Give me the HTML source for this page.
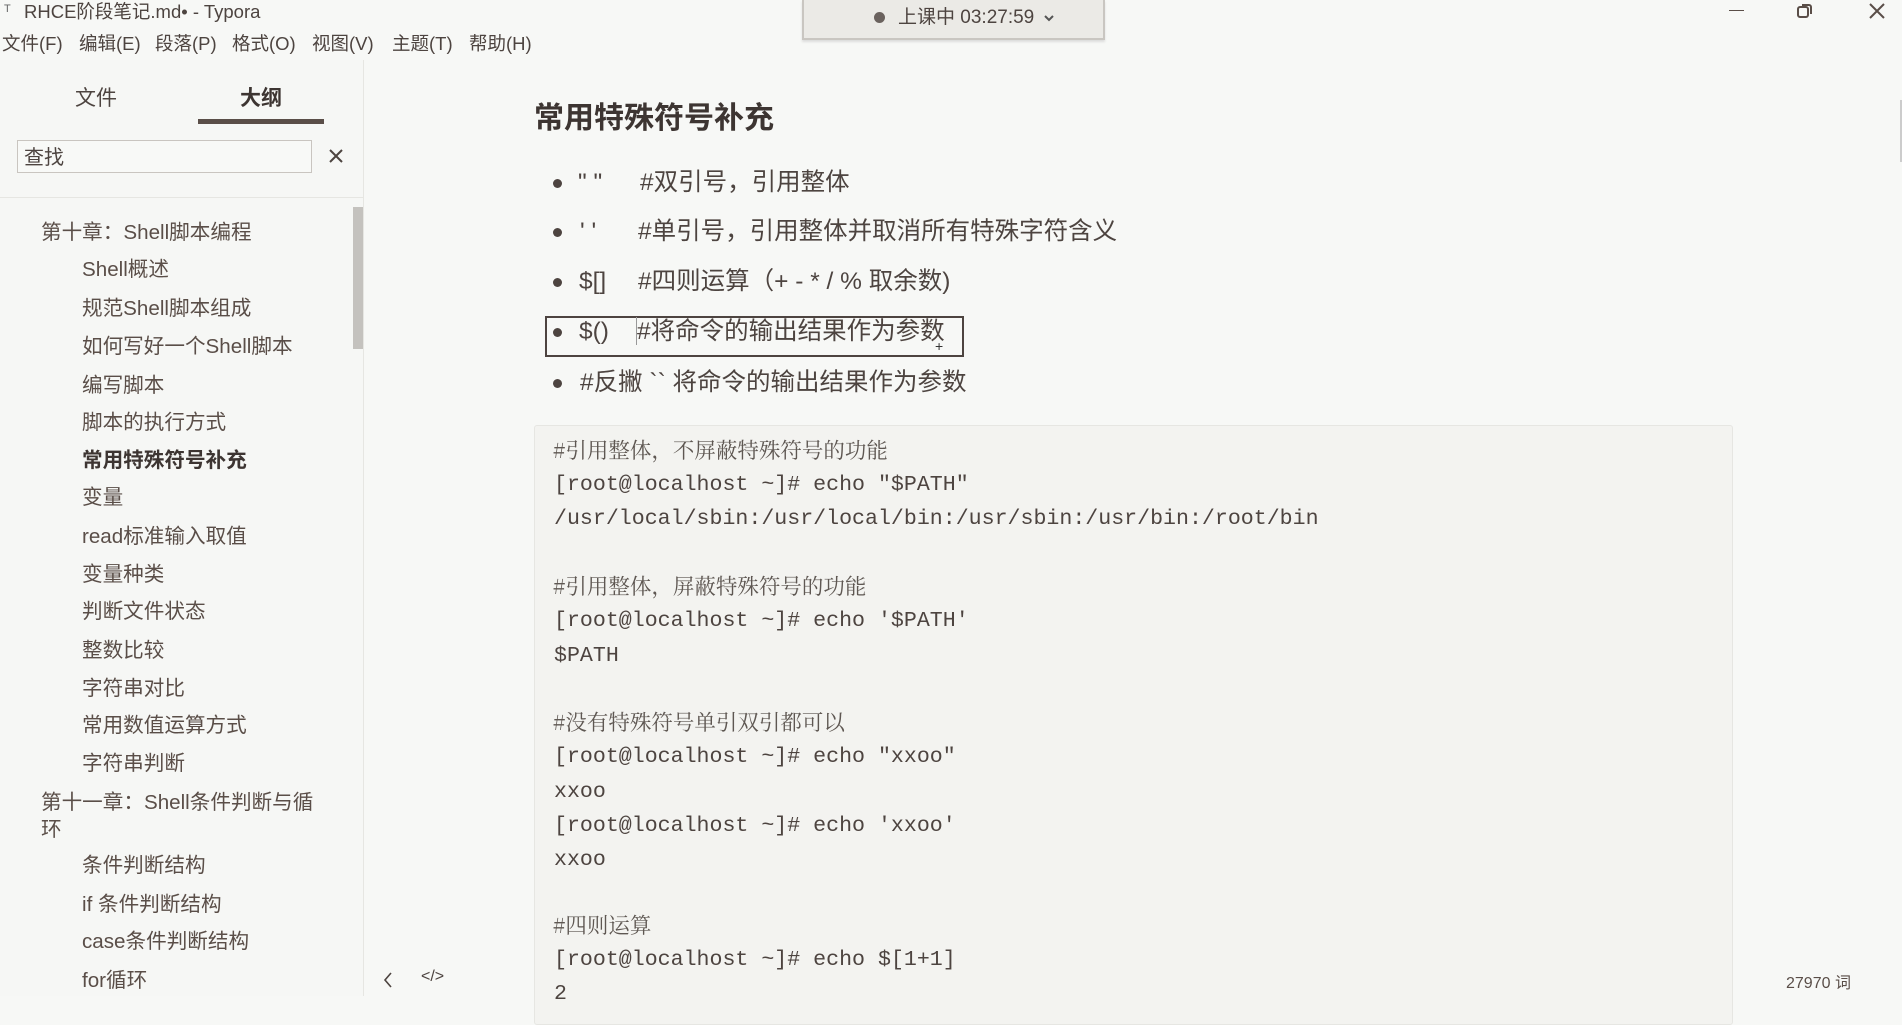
<!DOCTYPE html>
<html><head><meta charset="utf-8"><style>
*{margin:0;padding:0;box-sizing:border-box}
body{width:1902px;height:996px;overflow:hidden;background:#f7f8f6;position:relative;font-family:"Liberation Sans","Noto Sans CJK SC",sans-serif;color:#4d4440}
.a{position:absolute;white-space:nowrap}
.side{position:absolute;left:0;top:60px;width:364px;height:936px;border-right:1px solid #e6e6e2;background:#f6f7f5}
.o{position:absolute;font-size:20.6px;line-height:28px;color:#5a4e48;white-space:nowrap}
.l1{left:41px}.l2{left:82px}
.b{font-size:24.5px;line-height:32px;color:#4d4440}
.dot{position:absolute;width:9px;height:9px;border-radius:50%;background:#4d4440}
.code{position:absolute;left:534px;top:425px;width:1199px;height:600px;background:#f3f3f0;border:1px solid #e6e6e2;border-radius:3px}
.c{position:absolute;left:554px;font-family:"Liberation Mono","Noto Sans CJK SC",monospace;font-size:21.6px;line-height:30px;color:#4d4440;white-space:pre}
.cm{position:absolute;left:553px;font-family:"Noto Serif CJK SC",serif;font-size:21.5px;line-height:30px;color:#5e5752;white-space:pre}
.m{position:absolute;top:32px;font-size:18.5px;line-height:24px;white-space:nowrap}
</style></head><body>
<div class="a" style="left:4px;top:3px;font-size:11px;color:#666">T</div>
<div class="a" style="left:24px;top:1px;font-size:18.5px;line-height:22px">RHCE阶段笔记.md• - Typora</div>
<div class="m" style="left:2px">文件(F)</div>
<div class="m" style="left:79px">编辑(E)</div>
<div class="m" style="left:155px">段落(P)</div>
<div class="m" style="left:232px">格式(O)</div>
<div class="m" style="left:312px">视图(V)</div>
<div class="m" style="left:392px">主题(T)</div>
<div class="m" style="left:469px">帮助(H)</div>
<div class="a" style="left:802px;top:0;width:303px;height:40px;background:#ebeae6;border:2px solid #c9c6c1;border-top:none;box-shadow:0 2px 2px #ddd"></div>
<div class="a" style="left:874px;top:12px;width:11px;height:11px;border-radius:50%;background:#6a625e"></div>
<div class="a" style="left:898px;top:5px;font-size:19px;line-height:26px">上课中 03:27:59</div>
<svg class="a" style="left:1043px;top:13px" width="12" height="10"><path d="M2 3l4 4 4-4" stroke="#555" stroke-width="2" fill="none"/></svg>
<div class="a" style="left:1729px;top:10px;width:15px;height:1px;background:#5a4e48"></div>
<svg class="a" style="left:1797px;top:3px" width="17" height="16"><rect x="1" y="4" width="10" height="10" rx="2" stroke="#5a4e48" stroke-width="2" fill="none"/><path d="M5 2h7a2 2 0 0 1 2 2v7" stroke="#5a4e48" stroke-width="2" fill="none"/></svg>
<svg class="a" style="left:1868px;top:2px" width="18" height="18"><path d="M2 2l14 14M16 2L2 16" stroke="#5a4e48" stroke-width="2"/></svg>
<div class="a" style="left:1900px;top:100px;width:2px;height:62px;background:#ccc"></div>

<div class="side">
<div class="a" style="left:75px;top:22px;font-size:21px">文件</div>
<div class="a" style="left:240px;top:22px;font-size:21px;font-weight:bold;color:#3d3532">大纲</div>
<div class="a" style="left:198px;top:59px;width:126px;height:5px;background:#5a4e48"></div>
<div class="a" style="left:17px;top:80px;width:295px;height:33px;border:1px solid #c9c5c0;background:#f8f9f7"></div>
<div class="a" style="left:24px;top:85px;font-size:20px;line-height:26px">查找</div>
<svg class="a" style="left:328px;top:88px" width="16" height="16"><path d="M2 2l12 12M14 2L2 14" stroke="#4d4440" stroke-width="2"/></svg>
<div class="a" style="left:0;top:137px;width:363px;height:1px;background:#e6e6e2"></div>
<div class="a" style="left:353px;top:147px;width:10px;height:142px;background:#c4c2be"></div>
</div>
<div class="o l1" style="top:219px">第十章：Shell脚本编程</div>
<div class="o l2" style="top:256px">Shell概述</div>
<div class="o l2" style="top:295px">规范Shell脚本组成</div>
<div class="o l2" style="top:333px">如何写好一个Shell脚本</div>
<div class="o l2" style="top:372px">编写脚本</div>
<div class="o l2" style="top:409px">脚本的执行方式</div>
<div class="o l2" style="top:447px;font-weight:bold;color:#3d3532">常用特殊符号补充</div>
<div class="o l2" style="top:484px">变量</div>
<div class="o l2" style="top:523px">read标准输入取值</div>
<div class="o l2" style="top:561px">变量种类</div>
<div class="o l2" style="top:598px">判断文件状态</div>
<div class="o l2" style="top:637px">整数比较</div>
<div class="o l2" style="top:675px">字符串对比</div>
<div class="o l2" style="top:712px">常用数值运算方式</div>
<div class="o l2" style="top:750px">字符串判断</div>
<div class="o l1" style="top:789px">第十一章：Shell条件判断与循</div>
<div class="o l1" style="top:816px">环</div>
<div class="o l2" style="top:852px">条件判断结构</div>
<div class="o l2" style="top:891px">if 条件判断结构</div>
<div class="o l2" style="top:928px">case条件判断结构</div>
<div class="o l2" style="top:967px">for循环</div>

<div class="a" style="left:534px;top:99px;font-size:30px;line-height:40px;font-weight:bold;color:#3d3532">常用特殊符号补充</div>
<div class="dot" style="left:553px;top:179px"></div><div class="a b" style="left:578px;top:167px">" "</div><div class="a b" style="left:640px;top:167px">#双引号，引用整体</div>
<div class="dot" style="left:553px;top:228px"></div><div class="a b" style="left:580px;top:216px">' '</div><div class="a b" style="left:638px;top:216px">#单引号，引用整体并取消所有特殊字符含义</div>
<div class="dot" style="left:553px;top:278px"></div><div class="a b" style="left:579px;top:266px">$[]</div><div class="a b" style="left:638px;top:266px">#四则运算（+ - * / % 取余数)</div>
<div class="a" style="left:545px;top:316px;width:419px;height:41px;border:2px solid #4d4440"></div>
<div class="dot" style="left:553px;top:328px"></div><div class="a b" style="left:579px;top:316px">$()</div><div class="a" style="left:636px;top:317px;width:1px;height:28px;background:#999"></div><div class="a b" style="left:637px;top:316px">#将命令的输出结果作为参数</div>
<div class="a" style="left:935px;top:338px;font-size:14px;color:#333">+</div>
<div class="dot" style="left:553px;top:379px"></div><div class="a b" style="left:580px;top:367px">#反撇 `` 将命令的输出结果作为参数</div>

<div class="code"></div>
<div class="cm" style="top:435px">#引用整体，不屏蔽特殊符号的功能</div>
<div class="c" style="top:470px">[root@localhost ~]# echo "$PATH"</div>
<div class="c" style="top:504px">/usr/local/sbin:/usr/local/bin:/usr/sbin:/usr/bin:/root/bin</div>
<div class="cm" style="top:571px">#引用整体，屏蔽特殊符号的功能</div>
<div class="c" style="top:606px">[root@localhost ~]# echo '$PATH'</div>
<div class="c" style="top:641px">$PATH</div>
<div class="cm" style="top:707px">#没有特殊符号单引双引都可以</div>
<div class="c" style="top:742px">[root@localhost ~]# echo "xxoo"</div>
<div class="c" style="top:777px">xxoo</div>
<div class="c" style="top:811px">[root@localhost ~]# echo 'xxoo'</div>
<div class="c" style="top:845px">xxoo</div>
<div class="cm" style="top:910px">#四则运算</div>
<div class="c" style="top:945px">[root@localhost ~]# echo $[1+1]</div>
<div class="c" style="top:979px">2</div>

<svg class="a" style="left:382px;top:971px" width="12" height="18"><path d="M9 2L3 9l6 7" stroke="#4d4440" stroke-width="1.6" fill="none"/></svg>
<div class="a" style="left:421px;top:968px;font-size:16px;color:#4d4440">&lt;/&gt;</div>
<div class="a" style="left:1786px;top:969px;font-size:16px;color:#5a4e48">27970 词</div>
</body></html>
